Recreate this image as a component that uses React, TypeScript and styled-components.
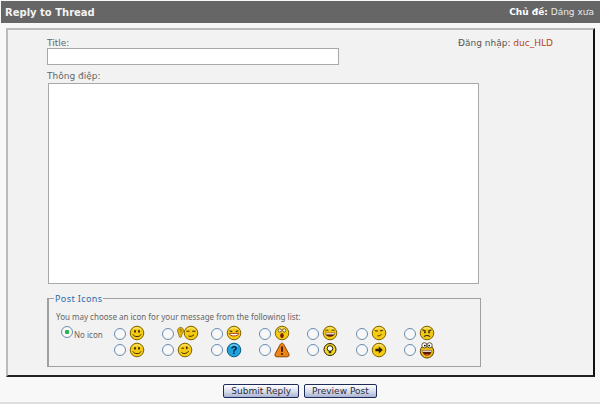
import React from 'react';
import styled, { createGlobalStyle } from 'styled-components';

const GlobalStyle = createGlobalStyle`
  html, body {
    margin: 0;
    padding: 0;
    background: #f8f8f8;
  }
`;

type IconKind =
  | 'smile' | 'ear' | 'tongue' | 'shock' | 'grin' | 'wink' | 'angry'
  | 'happy' | 'wink2' | 'question' | 'alert' | 'idea' | 'arrow' | 'crazy';

const iconRows: IconKind[] = [
  'smile', 'ear', 'tongue', 'shock', 'grin', 'wink', 'angry',
  'happy', 'wink2', 'question', 'alert', 'idea', 'arrow', 'crazy',
];

function Ball({ fill = '#f4cb12', stroke = '#7d6200' }: { fill?: string; stroke?: string }) {
  return (
    <>
      <circle cx="8" cy="8" r="6.8" fill={fill} stroke={stroke} strokeWidth="1" />
      <path d="M4 4.6a5.4 5.4 0 0 1 8 0" fill="none" stroke="#fff" strokeOpacity=".55" strokeWidth="1" />
    </>
  );
}

function Face({ kind }: { kind: IconKind }) {
  const ink = '#3a2c00';
  switch (kind) {
    case 'smile':
    case 'happy':
      return (
        <>
          <Ball />
          <ellipse cx="6" cy="6.3" rx=".9" ry="1.5" fill={ink} />
          <ellipse cx="10" cy="6.3" rx=".9" ry="1.5" fill={ink} />
          <path d="M3.9 9.4c1.6 3 6.6 3 8.2 0" fill="none" stroke={ink} strokeWidth="1" />
        </>
      );
    case 'ear':
      return (
        <>
          <path d="M3.6 2.4c-2 0-3.2 1.6-3 3.6.1 1.4 1 2.2 1.2 3.4.2 1.4.3 3 1.6 3 1.2 0 1.2-1.8 1.6-3 .5-1.4 1.5-2 1.5-3.6 0-2.2-1.2-3.4-2.9-3.4z" fill="#e8b810" stroke="#7d6200" strokeWidth=".8" />
          <path d="M2.4 5c.4-1 1.8-1 2 .2.1.8-.8 1.2-.9 2" fill="none" stroke="#6a5000" strokeWidth=".8" />
          <g transform="translate(6 0)">
            <Ball />
            <path d="M3.5 6.2h3M9.2 6.2h3.3" stroke={ink} strokeWidth="1.1" />
            <path d="M5.5 11c2 .8 4 .2 5.5-1.3" fill="none" stroke={ink} strokeWidth="1" />
          </g>
        </>
      );
    case 'tongue':
      return (
        <>
          <Ball />
          <path d="M3.6 5.8l2.6.8M12.4 5.8l-2.6.8" stroke={ink} strokeWidth="1.1" />
          <path d="M3.2 8.4h9.6c-.6 3.4-8.9 3.4-9.6 0z" fill="#fff" stroke="#b0401a" strokeWidth="1" />
        </>
      );
    case 'shock':
      return (
        <>
          <Ball />
          <circle cx="5.8" cy="5.4" r="1.6" fill="#fff" stroke={ink} strokeWidth=".7" />
          <circle cx="10.2" cy="5.4" r="1.6" fill="#fff" stroke={ink} strokeWidth=".7" />
          <ellipse cx="8" cy="10.6" rx="1.8" ry="2.5" fill="#7a1e08" />
        </>
      );
    case 'grin':
      return (
        <>
          <Ball />
          <path d="M3.4 5.8c1-1 2-1 3 0M9.6 5.8c1-1 2-1 3 0" fill="none" stroke={ink} strokeWidth="1" />
          <path d="M2.8 7.8h10.4c-.5 5.4-9.9 5.4-10.4 0z" fill="#5a1806" />
          <path d="M3.4 8.2h9.2v1.2H3.4z" fill="#fff" />
        </>
      );
    case 'wink':
      return (
        <>
          <Ball />
          <path d="M3.8 5.6l3 .5M9 6l3-.8" stroke={ink} strokeWidth="1" />
          <path d="M6.5 10.8c1.6.3 3-.3 4-1.6" fill="none" stroke={ink} strokeWidth="1" />
        </>
      );
    case 'angry':
      return (
        <>
          <Ball fill="#eec81c" />
          <path d="M3.6 4.8l3.2 1.6M12.4 4.8L9.2 6.4" stroke={ink} strokeWidth="1.2" />
          <circle cx="5.9" cy="7.4" r=".9" fill={ink} />
          <circle cx="10.1" cy="7.4" r=".9" fill={ink} />
          <path d="M5 11.6c1.6-1.5 4.4-1.5 6 0" fill="none" stroke={ink} strokeWidth="1.1" />
        </>
      );
    case 'wink2':
      return (
        <>
          <Ball />
          <ellipse cx="9.8" cy="5.8" rx=".9" ry="1.5" fill={ink} />
          <path d="M4.4 6.2h2.6" stroke={ink} strokeWidth="1" />
          <path d="M4.4 10.4c2 1.8 5.4 1.4 7.2-1.2" fill="none" stroke={ink} strokeWidth="1" />
        </>
      );
    case 'question':
      return (
        <>
          <Ball fill="#1ea4dc" stroke="#0a5a80" />
          <text x="8" y="12.4" textAnchor="middle" fontFamily="'Liberation Sans', sans-serif" fontWeight="700" fontSize="11" fill="#06273a">?</text>
        </>
      );
    case 'alert':
      return (
        <>
          <path d="M8 1.2c1 0 1.6.8 2.2 2l4.6 8.6c.8 1.8 0 3-1.8 3H3c-1.8 0-2.6-1.2-1.8-3l4.6-8.6c.6-1.2 1.2-2 2.2-2z" fill="#ee8413" stroke="#8a4400" />
          <path d="M8 4.6v5.2" stroke="#3a1a00" strokeWidth="1.8" />
          <circle cx="8" cy="12" r="1.1" fill="#3a1a00" />
        </>
      );
    case 'idea':
      return (
        <>
          <circle cx="8" cy="7.5" r="6" fill="#f3d82a" stroke="#2a2000" />
          <circle cx="8" cy="6.5" r="2.8" fill="#fff" stroke="#2a2000" strokeWidth="1" />
          <path d="M6.8 9.2h2.4v2H6.8z" fill="#2a2000" />
        </>
      );
    case 'arrow':
      return (
        <>
          <Ball />
          <path d="M4.4 6.8h3.4V4.6L11.8 8l-4 3.4V9.2H4.4z" fill="#2e2200" />
        </>
      );
    case 'crazy':
      return (
        <>
          <circle cx="8" cy="10.3" r="6.7" fill="#e8bc12" stroke="#5a4400" />
          <circle cx="5.4" cy="4.3" r="2.6" fill="#fff" stroke="#3a2c00" strokeWidth=".8" />
          <circle cx="10.6" cy="4.3" r="2.6" fill="#fff" stroke="#3a2c00" strokeWidth=".8" />
          <circle cx="5.8" cy="4.6" r=".9" fill="#000" />
          <circle cx="10.2" cy="4.6" r=".9" fill="#000" />
          <path d="M3.2 9.2h9.6c-.4 7-9.2 7-9.6 0z" fill="#5a1806" />
          <path d="M3.6 9.6h8.8v1.2H3.6z" fill="#fff" />
          <ellipse cx="8" cy="14" rx="2" ry="1" fill="#e0562a" />
        </>
      );
  }
}

const iconBox = (kind: IconKind) => {
  if (kind === 'ear') return { w: 22, h: 16 };
  if (kind === 'crazy') return { w: 16, h: 18 };
  return { w: 16, h: 16 };
};

function App() {
  return (
    <Page>
      <GlobalStyle />
      <Header>
        <HeaderTitle>Reply to Thread</HeaderTitle>
        <Topic>
          <b>Chủ đề:</b> Dáng xưa
        </Topic>
      </Header>
      <Panel>
        <FormColumn>
          <TitleLabel>Title:</TitleLabel>
          <TitleInput type="text" />
          <FieldLabel>Thông điệp:</FieldLabel>
          <MessageBox />
          <IconsFieldset>
            <IconsLegend>Post Icons</IconsLegend>
            <Hint>You may choose an icon for your message from the following list:</Hint>
            <IconGrid>
              <NoIcon>
                <Radio type="radio" name="icon" defaultChecked />
                <span>No icon</span>
              </NoIcon>
              {iconRows.map((kind) => {
                const { w, h } = iconBox(kind);
                return (
                  <IconOption key={kind}>
                    <Radio type="radio" name="icon" />
                    <svg width={w} height={h} viewBox={`0 0 ${w} ${h}`}>
                      <Face kind={kind} />
                    </svg>
                  </IconOption>
                );
              })}
            </IconGrid>
          </IconsFieldset>
        </FormColumn>
        <LoginInfo>
          Đăng nhập: <UserName>duc_HLD</UserName>
        </LoginInfo>
      </Panel>
      <Buttons>
        <Button>Submit Reply</Button>
        <Button>Preview Post</Button>
      </Buttons>
    </Page>
  );
}

export default App;

const Page = styled.div`
  width: 600px;
  height: 404px;
  box-sizing: border-box;
  padding-top: 1px;
  overflow: hidden;
  background: #f8f8f8;
  border-bottom: 2px solid #dedede;
  font-family: 'DejaVu Sans', Verdana, sans-serif;
  font-size: 9px;
  color: #555;
`;

const Header = styled.div`
  height: 22px;
  margin-left: 1px;
  padding: 0 6px 0 4px;
  box-sizing: border-box;
  display: flex;
  justify-content: space-between;
  align-items: center;
  background: #666;
  color: #f2f2f2;
`;

const HeaderTitle = styled.div`
  font-size: 10px;
  font-weight: 700;
`;

const Topic = styled.div`
  font-size: 9px;
  color: #e8e8e8;

  b {
    color: #fff;
  }
`;

const Panel = styled.div`
  height: 349px;
  margin: 5px 5px 0 6px;
  padding: 7px 0 0 39px;
  box-sizing: border-box;
  display: flex;
  background: #f2f2f2;
  border-style: solid;
  border-width: 2px;
  border-color: #bbb #111 #222 #bbb;
`;

const FormColumn = styled.div`
  width: 434px;
  display: flex;
  flex-direction: column;
`;

const FieldLabel = styled.div`
  height: 11px;
  line-height: 11px;
  color: #666;
`;

const TitleLabel = styled(FieldLabel)`
  line-height: 13px;
`;

const TitleInput = styled.input`
  width: 292px;
  height: 17px;
  box-sizing: border-box;
  margin: 0 0 6px 0;
  padding: 0;
  background: #fff;
  border: 1px solid #a8a8a8;
  outline: none;
`;

const MessageBox = styled.div`
  width: 431px;
  height: 201px;
  margin: 1px 0 14px 1px;
  box-sizing: border-box;
  background: #fff;
  border: 1px solid #a8a8a8;
`;

const IconsFieldset = styled.fieldset`
  width: 434px;
  height: 74px;
  margin: -5px 0 0 0;
  padding: 0 0 0 7px;
  box-sizing: border-box;
  border: 1px solid #a0a0a0;
  border-left-width: 2px;
`;

const IconsLegend = styled.legend`
  margin-left: -2px;
  padding: 0 1px;
  color: #2a6aa8;
  font-family: 'Noto Sans', sans-serif;
  font-size: 9px;
  letter-spacing: 0.4px;
  line-height: 11px;
`;

const Hint = styled.div`
  height: 11px;
  line-height: 11px;
  margin-top: 7px;
  color: #666;
  font-family: 'Noto Sans', sans-serif;
  font-size: 8px;
  white-space: nowrap;
`;

const IconGrid = styled.div`
  display: grid;
  grid-template-columns: 58px repeat(7, 48.33px);
  grid-auto-rows: 16.5px;
  margin-top: 3px;
`;

const NoIcon = styled.label`
  grid-row: span 2;
  display: flex;
  align-items: flex-start;
  gap: 1px;
  margin-left: 5px;
  color: #666;
  font-family: 'Noto Sans', sans-serif;
  font-size: 8px;

  span {
    margin-top: 4px;
  }
`;

const IconOption = styled.label`
  display: flex;
  align-items: center;
  gap: 3px;
`;

const Radio = styled.input`
  appearance: none;
  flex: none;
  width: 12px;
  height: 12px;
  margin: 1px 0 0 0;
  border: 1px solid #6a8cb0;
  border-radius: 50%;
  background: #f8f8f8;

  &:checked {
    background: radial-gradient(circle, #25b848 0 2px, #f8f8f8 2.5px);
  }
`;

const LoginInfo = styled.div`
  margin: 1px 0 0 -23px;
  white-space: nowrap;
  color: #555;
  font-size: 9px;
`;

const UserName = styled.span`
  color: #bb4310;
`;

const Buttons = styled.div`
  display: flex;
  justify-content: center;
  gap: 5px;
  margin-top: 7px;
`;

const Button = styled.button`
  height: 14px;
  padding: 0 7px;
  font-family: inherit;
  font-size: 9px;
  line-height: 10px;
  color: #2c2c3c;
  background: linear-gradient(#ffffff, #d7dcec 55%, #aab4d0);
  border: 1px solid #1c2a5c;
  border-radius: 2px;
`;
